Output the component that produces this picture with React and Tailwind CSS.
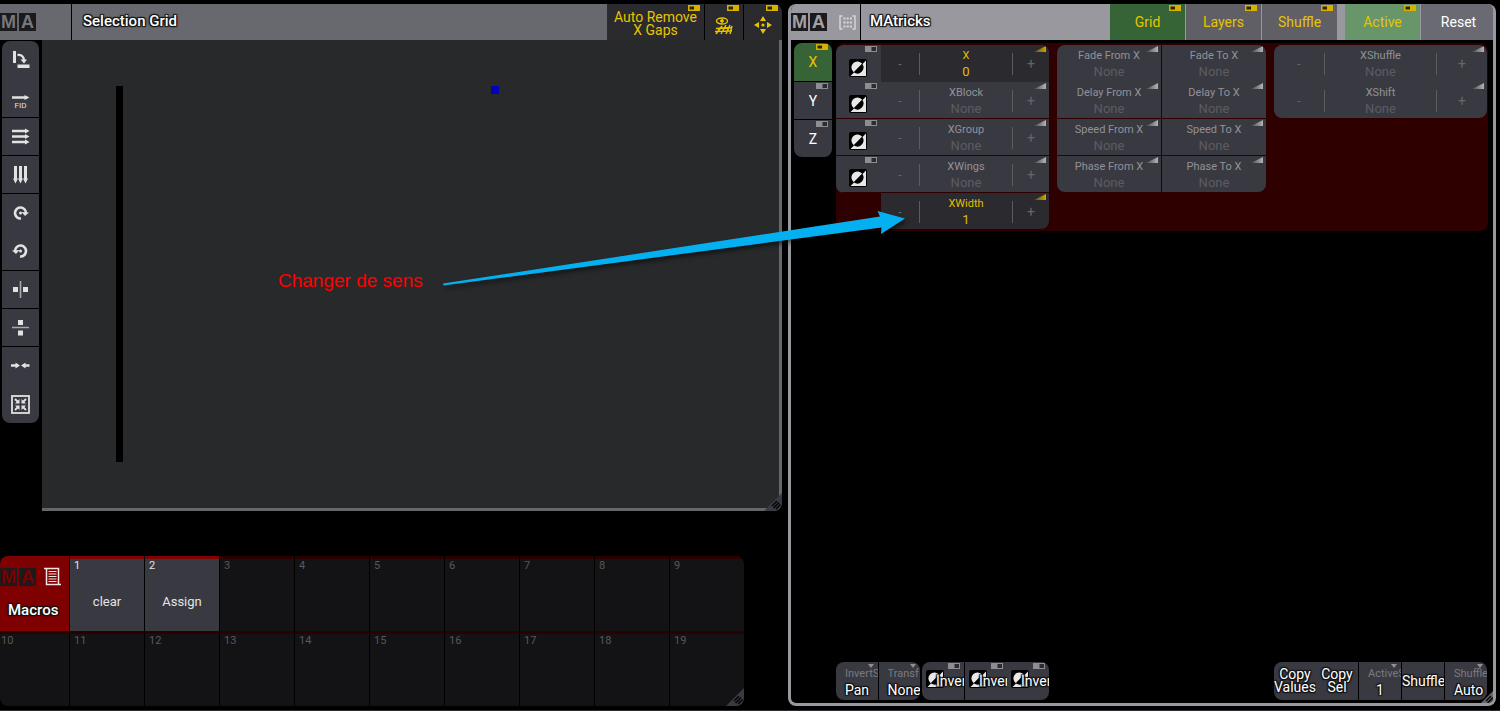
import React from "react";

const OUTLINE =
  "[text-shadow:-1px_-1px_1px_#111,1px_-1px_1px_#111,-1px_1px_1px_#111,1px_1px_1px_#111,0_0_2px_#111]";

function MaLogo({ box = "bg-[#1b1a1c]", letter = "text-[#77777b]" }) {
  return (
    <div
      className={`flex h-[18px] shrink-0 gap-[2px] text-center font-['Liberation_Sans_Narrow','Liberation_Sans',sans-serif] text-lg leading-[19px] font-bold ${letter}`}
    >
      <span className={`w-[17px] ${box}`}>M</span>
      <span className={`w-[17px] ${box}`}>A</span>
    </div>
  );
}

function Toggle({ on = false }) {
  return (
    <svg width="12" height="6" viewBox="0 0 12 6" className="absolute top-px right-1" aria-hidden="true">
      <rect width="12" height="6" fill={on ? "#d8b000" : "#8e8e92"} />
      {on ? (
        <rect x="1.500" y="1.500" width="4.500" height="3" fill="#2c2600" />
      ) : (
        <rect x="6.500" y="1" width="4.500" height="4" fill="#2b2b30" />
      )}
    </svg>
  );
}

function Ramp({ on = false }) {
  const id = on ? "ramp-on" : "ramp-off";
  return (
    <svg width="12" height="6" viewBox="0 0 12 6" className="absolute top-px right-[3px]" aria-hidden="true">
      <defs>
        <linearGradient id={id}>
          <stop offset="0" stopColor={on ? "#5a4c10" : "#4a4a4f"} />
          <stop offset="1" stopColor={on ? "#c9a800" : "#b4b4b6"} />
        </linearGradient>
      </defs>
      <path d="M0 6L12 0V6Z" fill={`url(#${id})`} />
    </svg>
  );
}

function Drop() {
  return (
    <svg width="6" height="4" viewBox="0 0 6 4" className="absolute top-[2px] right-1" aria-hidden="true">
      <path d="M0 0H6L3 4Z" fill="#909094" />
    </svg>
  );
}

function InvertIcon({ className = "" }) {
  return (
    <svg width="18" height="18" viewBox="0 0 18 18" className={className} aria-hidden="true">
      <rect width="18" height="18" rx="2" fill="#000" />
      <path d="M17 1.500V17H1.500Z" fill="#e8e8e8" />
      <path d="M4.800 13.200A6 6 0 1 1 13.200 4.800Z" fill="#e8e8e8" />
      <path d="M13.200 4.800A6 6 0 0 1 4.800 13.200Z" fill="#000" />
    </svg>
  );
}

function Resize({ fill = "#3a3a43" }) {
  return (
    <svg width="18" height="18" viewBox="0 0 18 18" className="absolute right-0 bottom-0" aria-hidden="true">
      <path d="M18 0V14L14 18H0Z" fill={fill} />
      <path d="M8 13L13 8M9.500 15L15 9.500M12 16L16.500 11.500" stroke="#050505" strokeWidth="1.600" />
    </svg>
  );
}

const W = "#e2e2e2";
const tools = {
  rotate: (
    <>
      <rect x="2" y="0" width="3" height="12" fill={W} />
      <rect x="6.500" y="13.500" width="12" height="3.500" fill={W} />
      <path d="M6.500 4C10 3.500 12.500 5.500 13 9" fill="none" stroke={W} strokeWidth="2.400" />
      <path d="M9.500 8.500H16L13 12.500Z" fill={W} />
    </>
  ),
  fid: (
    <>
      <path d="M1 8.500H16" stroke={W} strokeWidth="2.400" />
      <path d="M13.500 6L18.500 8.500L13.500 11Z" fill={W} />
      <text x="9.500" y="19" textAnchor="middle" fontSize="8" fill={W}>FID</text>
    </>
  ),
  rows: (
    <>
      <path d="M1 4H16M1 9.500H16M1 15H16" stroke={W} strokeWidth="2.400" />
      <path d="M14 1.500L18.500 4L14 6.500ZM14 7L18.500 9.500L14 12ZM14 12.500L18.500 15L14 17.500Z" fill={W} />
    </>
  ),
  cols: (
    <>
      <path d="M4.500 1V15M9.500 1V15M14.500 1V15" stroke={W} strokeWidth="3" />
      <path d="M2 13.500H7L4.500 18.500ZM7 13.500H12L9.500 18.500ZM12 13.500H17L14.500 18.500Z" fill={W} />
    </>
  ),
  cw: (
    <>
      <path d="M10 14.500A5.500 5.500 0 1 1 15 9" fill="none" stroke={W} strokeWidth="2.600" />
      <path d="M10.500 8L18 8.500L14 12Z" fill={W} />
      <circle cx="9.500" cy="9" r="1.500" fill={W} />
    </>
  ),
  ccw: (
    <>
      <path d="M9 14.500A5.500 5.500 0 1 0 4 9" fill="none" stroke={W} strokeWidth="2.600" />
      <path d="M8.500 8L1 8.500L5 12Z" fill={W} />
      <circle cx="9.500" cy="9" r="1.500" fill={W} />
    </>
  ),
  mirrorX: (
    <>
      <rect x="2" y="7" width="5" height="5" fill={W} />
      <rect x="12" y="7" width="5" height="5" fill={W} />
      <path d="M9.500 1V18" stroke="#a8a8aa" strokeWidth="1.600" />
    </>
  ),
  mirrorY: (
    <>
      <rect x="7" y="2" width="5" height="5" fill={W} />
      <rect x="7" y="12.500" width="5" height="5" fill={W} />
      <path d="M1 9.500H18" stroke="#a8a8aa" strokeWidth="1.600" />
    </>
  ),
  squeeze: (
    <>
      <path d="M0 8.500H7M12 8.500H18.500" stroke={W} strokeWidth="2.400" />
      <path d="M4.500 5.500L9 8.500L4.500 11.500ZM14.500 5.500L10 8.500L14.500 11.500Z" fill={W} />
    </>
  ),
  compress: (
    <>
      <rect x="1" y="1" width="17" height="17" fill="none" stroke={W} strokeWidth="1.800" />
      <path d="M4 4L7 7M15 4L12 7M4 15L7 12M15 15L12 12" stroke={W} strokeWidth="1.800" />
      <path d="M8.500 4V8.500H4ZM10.500 4V8.500H15ZM8.500 15V10.500H4ZM10.500 15V10.500H15Z" fill={W} />
    </>
  ),
};

const toolGroups = [
  [["rotate", "Rotate"], ["fid", "Sort by FID"]],
  [["rows", "Rows"]],
  [["cols", "Columns"]],
  [["cw", "Turn clockwise"], ["ccw", "Turn counterclockwise"]],
  [["mirrorX", "Mirror X"]],
  [["mirrorY", "Mirror Y"]],
  [["squeeze", "Remove gaps"], ["compress", "Compress"]],
];

function SelectionGrid() {
  return (
    <section className="relative flex flex-1 flex-col overflow-hidden rounded-lg rounded-l-none bg-black">
      <header className="flex h-9 gap-px bg-black text-sm text-[#e6c400]">
        <div className="flex w-[71px] items-center bg-[#68696e]"><MaLogo /></div>
        <div className="flex flex-1 bg-[#68696e] px-[11px]">
          <h1 className={`pt-[7px] text-[15px] leading-5 font-medium text-white ${OUTLINE}`}>Selection Grid</h1>
        </div>
        <div className="-ml-px flex gap-px">
          <button className="relative w-[97px] bg-[#2a2a2f] pt-[3px] leading-[13px]">
            Auto Remove<br />X Gaps<Toggle on />
          </button>
          <button className="relative flex w-[38px] items-end justify-center bg-[#2a2a2f] pb-1" aria-label="Show grid">
            <svg width="20" height="20" viewBox="0 0 20 20" fill="none" stroke="#e6c400">
              <ellipse cx="8" cy="5" rx="5.500" ry="3" strokeWidth="1.400" />
              <circle cx="8" cy="5" r="1.400" fill="#e6c400" />
              <path d="M2 18L8 10M7 18L12 9M12 18L16 9M2 12.500L18 11.500M1 15.500L18 15M16 18L18 10" strokeWidth="1.500" />
            </svg>
            <Toggle on />
          </button>
          <button className="relative flex w-[38px] items-end justify-center bg-[#2a2a2f] pb-[5px]" aria-label="Move view">
            <svg width="20" height="20" viewBox="0 0 20 20" fill="#e6c400">
              <path d="M10 1L13 6H7ZM10 19L13 14H7ZM1 10L6 7V13ZM19 10L14 7V13Z" />
              <circle cx="10" cy="10" r="1.600" />
            </svg>
            <Toggle on />
          </button>
        </div>
      </header>
      <div className="flex flex-1">
        <nav className="w-[42px] px-[2px] pt-px">
          <div className="flex w-[37px] flex-col gap-px overflow-hidden rounded-lg">
            {toolGroups.map((group) => (
              <div key={group[0][0]} className="flex flex-col bg-[#393942]">
                {group.map(([id, label]) => (
                  <button
                    key={id}
                    aria-label={label}
                    className={`flex items-center justify-center ${group.length > 1 ? "h-[38px]" : "h-[37px]"}`}
                  >
                    <svg width="19" height="19" viewBox="0 0 19 19" className="overflow-visible">{tools[id]}</svg>
                  </button>
                ))}
              </div>
            ))}
          </div>
        </nav>
        <div className="relative flex-1 rounded-br-lg border-r-[3px] border-b-[3px] border-[#66676b] bg-[#28292b]">
          <div className="absolute top-[46px] left-[74px] h-[376px] w-[7px] bg-black" />
          <div className="absolute top-[46px] left-[449px] size-2 bg-[#0000b8]" />
          <p className="absolute top-[229px] left-[236px] font-['Liberation_Sans',sans-serif] text-[19px] leading-6 text-[#ff0000]">
            Changer de sens
          </p>
        </div>
      </div>
      <Resize />
    </section>
  );
}

const macros = { 1: "clear", 2: "Assign" };

function MacroCell({ n }) {
  const name = macros[n];
  return (
    <button
      className={`relative flex h-[75px] flex-col border-t-[3px] pt-px text-left ${n === 10 ? "pl-px" : "px-1"} ${
        name ? "border-[#7f0000] bg-[#393942] text-[#e4e4e4]" : "border-[#2b0000] bg-[#131315] text-[#58585a]"
      }`}
    >
      <span className="text-[11px] leading-3">{n}</span>
      {name && <span className="w-full pt-[20px] text-center text-[13px] leading-5">{name}</span>}
    </button>
  );
}

function Macros() {
  return (
    <section className="relative mr-[38px] grid grid-cols-[69fr_repeat(9,74fr)] gap-x-px overflow-hidden rounded-lg bg-black">
      <div className="flex h-[75px] flex-col bg-[#7f0000]">
        <div className="flex items-center gap-2 pt-[11px]">
          <MaLogo letter="text-[#7a0000]" />
          <svg width="18" height="19" viewBox="0 0 18 19" fill="none" stroke="#f0e4e4">
            <path d="M0 1.500H14.500V17.500H17M2.500 1.500V17.500H16" strokeWidth="1.500" />
            <path d="M4.500 4.500H12.500M4.500 7H12.500M4.500 9.500H12.500M4.500 12H12.500M4.500 14.500H12.500" strokeWidth="1.200" />
          </svg>
        </div>
        <h2 className={`pt-[14px] pl-2 text-[15px] leading-5 font-medium text-white ${OUTLINE}`}>Macros</h2>
      </div>
      {Array.from({ length: 19 }, (_, i) => <MacroCell key={i} n={i + 1} />)}
      <Resize />
    </section>
  );
}

function Stepper({ label, value, on, wide, className = "" }) {
  return (
    <div className={`relative flex flex-1 items-center ${className}`}>
      <button
        aria-label={`Decrease ${label}`}
        className={`h-[22px] border-r border-[#5c5c60] text-xs text-[#66666a] ${wide ? "w-[51px]" : "w-[39px]"}`}
      >
        -
      </button>
      <button className="flex-1"><Caption label={label} value={value} on={on} /></button>
      <button
        aria-label={`Increase ${label}`}
        className={`h-[22px] border-l border-[#5c5c60] text-sm leading-5 text-[#66666a] ${wide ? "w-[51px]" : "w-[37px]"}`}
      >
        +
      </button>
      <Ramp on={on} />
    </div>
  );
}

function Caption({ label, value, on }) {
  return (
    <>
      <span className={`block text-[11px] leading-4 ${on ? "text-[#e0be00]" : "text-[#929296]"}`}>{label}</span>
      <span className={`block text-[13px] leading-4 ${on ? "text-[#e0be00]" : "text-[#5c5c61]"}`}>{value}</span>
    </>
  );
}

const steps = [
  { label: "X", value: "0", on: true },
  { label: "XBlock", value: "None" },
  { label: "XGroup", value: "None" },
  { label: "XWings", value: "None" },
];

function HeadButton({ children, className, on = true }) {
  return (
    <button className={`relative w-[75px] text-sm ${className}`}>
      {children}
      {on && <Toggle on />}
    </button>
  );
}

function SmallButton({ top, value, center = false, className = "" }) {
  return (
    <button className={`relative h-[38px] min-w-0 flex-1 overflow-hidden bg-[#393942] text-left whitespace-nowrap ${className}`}>
      <span className="block pt-[3px] pl-[9px] text-[11px] leading-[14px] text-[#7a7a7e]">{top}</span>
      <span className={`block text-sm leading-[18px] text-white ${center ? "text-center" : "pl-[9px]"} ${OUTLINE}`}>{value}</span>
      <Drop />
    </button>
  );
}

function InvertButton({ className = "" }) {
  return (
    <button className={`relative flex h-[38px] min-w-0 flex-1 items-center overflow-hidden bg-[#393942] pl-1 ${className}`}>
      <InvertIcon className="-mt-1 shrink-0" />
      <span className={`relative -ml-2 text-sm text-white ${OUTLINE}`}>Inver</span>
      <Toggle />
    </button>
  );
}

const COLUMNS = "grid grid-cols-[minmax(0,213fr)_minmax(0,209fr)_minmax(0,213fr)] gap-2 pr-px";

function MAtricks() {
  return (
    <section className="relative flex min-w-0 flex-col overflow-hidden rounded-lg border-r-[3px] border-b-[3px] border-l-[3px] border-[#98989e] bg-black">
      <header className="-mr-[3px] flex h-9 bg-[#98989e] text-[#e6c400]">
        <div className="flex w-[70px] items-center gap-3 border-r border-black">
          <MaLogo letter="text-[#a2a2a6]" />
          <svg width="17" height="15" viewBox="0 0 17 15" fill="none" stroke="#d8d8dc">
            <path d="M3.500 1H1V14H3.500M13.500 1H16V14H13.500" strokeWidth="1.400" />
            <path d="M4.500 3.500H13M4.500 7.500H13M4.500 11.500H13" strokeWidth="2" strokeDasharray="2 1.200" />
          </svg>
        </div>
        <h1 className={`flex-1 pt-[7px] pl-[9px] text-[15px] leading-5 font-medium text-white ${OUTLINE}`}>MAtricks</h1>
        <div className="flex gap-px">
          <HeadButton className="bg-[#376437]">Grid</HeadButton>
          <HeadButton className="bg-[#5f5f65]">Layers</HeadButton>
          <HeadButton className="bg-[#5f5f65]">Shuffle</HeadButton>
          <div className="w-1.5" />
          <HeadButton className="bg-[#68966a]">Active</HeadButton>
          <HeadButton on={false} className="bg-[#6a6a72] text-white">Reset</HeadButton>
        </div>
      </header>
      <div className="flex flex-1 gap-1 pt-[3px] pr-[5px] pb-[3px] pl-[3px]">
        <div className="flex w-[38px] flex-col gap-px">
          <button className="relative h-[38px] rounded-t-lg bg-[#376437] text-sm text-[#e6c400]">X<Toggle on /></button>
          <button className="relative h-[37px] bg-[#393942] text-sm text-white">Y<Toggle /></button>
          <button className="relative h-[37px] rounded-b-lg bg-[#393942] text-sm text-white">Z<Toggle /></button>
        </div>
        <div className="flex min-w-0 flex-1 flex-col justify-between">
          <div className={`${COLUMNS} items-start rounded-lg bg-[#2f0000] py-[2px]`}>
            <div>
              <div className="flex flex-col overflow-hidden rounded-l-lg rounded-tr-lg">
                {steps.map((s, i) => (
                  <div key={s.label} className={`flex h-[37px] bg-[#393942] ${i > 0 ? "border-b border-[#2f0000]" : ""}`}>
                    <button aria-label={`Invert ${s.label}`} className="relative w-[45px] pt-2 pl-[13px]">
                      <InvertIcon />
                      <Toggle />
                    </button>
                    <Stepper {...s} className={s.on ? "bg-[#2a2a2f]" : "pt-[2px]"} />
                  </div>
                ))}
              </div>
              <Stepper label="XWidth" value="1" on className="ml-[45px] h-9 rounded-br-lg bg-[#2a2a2f] pt-[2px]" />
            </div>
            <div className="grid grid-cols-2 gap-x-px overflow-hidden rounded-lg">
              {["Fade", "Delay", "Speed", "Phase"].map((n, i) =>
                ["From", "To"].map((d) => (
                  <button
                    key={n + d}
                    className={`relative bg-[#393942] ${i === 3 ? "h-9" : "h-[37px]"} ${i > 0 ? "pt-[2px]" : ""} ${
                      i === 1 || i === 2 ? "border-b border-[#2f0000]" : ""
                    }`}
                  >
                    <Caption label={`${n} ${d} X`} value="None" />
                    <Ramp />
                  </button>
                ))
              )}
            </div>
            <div className="overflow-hidden rounded-lg bg-[#393942]">
              <Stepper label="XShuffle" value="None" wide className="h-[37px]" />
              <Stepper label="XShift" value="None" wide className="h-9 pt-[2px]" />
            </div>
          </div>
          <div className={COLUMNS}>
            <div className="flex gap-[2px]">
              <div className="flex min-w-0 flex-[84] gap-px overflow-hidden rounded-lg">
                <SmallButton top="InvertS" value="Pan" />
                <SmallButton top="Transf" value="None" />
              </div>
              <div className="flex min-w-0 flex-[127] overflow-hidden rounded-lg">
                <InvertButton className="border-r border-black" />
                <InvertButton />
                <InvertButton />
              </div>
            </div>
            <div />
            <div className="flex overflow-hidden rounded-lg">
              {["Values", "Sel"].map((t) => (
                <button
                  key={t}
                  className={`h-[38px] min-w-0 flex-1 overflow-hidden bg-[#393942] text-sm leading-[13px] text-white ${OUTLINE}`}
                >
                  Copy<br />{t}
                </button>
              ))}
              <SmallButton top="ActiveS" value="1" center className="border-l border-black" />
              <button className={`h-[38px] min-w-0 flex-1 overflow-hidden border-x border-black bg-[#393942] text-left text-sm text-white ${OUTLINE}`}>
                Shuffle
              </button>
              <SmallButton top="Shuffle" value="Auto" />
            </div>
          </div>
        </div>
      </div>
      <svg width="18" height="18" viewBox="0 0 18 18" className="absolute -right-[3px] -bottom-[3px]" aria-hidden="true">
        <path d="M18 0V14L14 18H0Z" fill="#66666c" />
        <path d="M8 13L13 8M9.500 15L15 9.500M12 16L16.500 11.500" stroke="#050505" strokeWidth="1.600" />
      </svg>
    </section>
  );
}

export default function App() {
  return (
    <main className="relative grid min-h-screen grid-cols-[minmax(0,782fr)_minmax(0,708fr)] gap-1.5 overflow-hidden border-b border-[#2c2c33] bg-black pt-1 pr-1 pb-1 font-[Roboto,sans-serif]">
      <div className="flex min-w-0 flex-col gap-[45px]">
        <SelectionGrid />
        <Macros />
      </div>
      <MAtricks />
      <svg
        width="470"
        height="90"
        viewBox="440 205 470 90"
        className="pointer-events-none absolute top-[205px] left-[440px] [filter:drop-shadow(2px_3px_2px_rgba(0,0,0,0.5))]"
        aria-hidden="true"
      >
        <path d="M443 283.500L880 216.500L877.500 211L905 218.500L881 234L881.500 227.500L443.500 285.500Z" fill="#04b0f0" />
      </svg>
    </main>
  );
}
